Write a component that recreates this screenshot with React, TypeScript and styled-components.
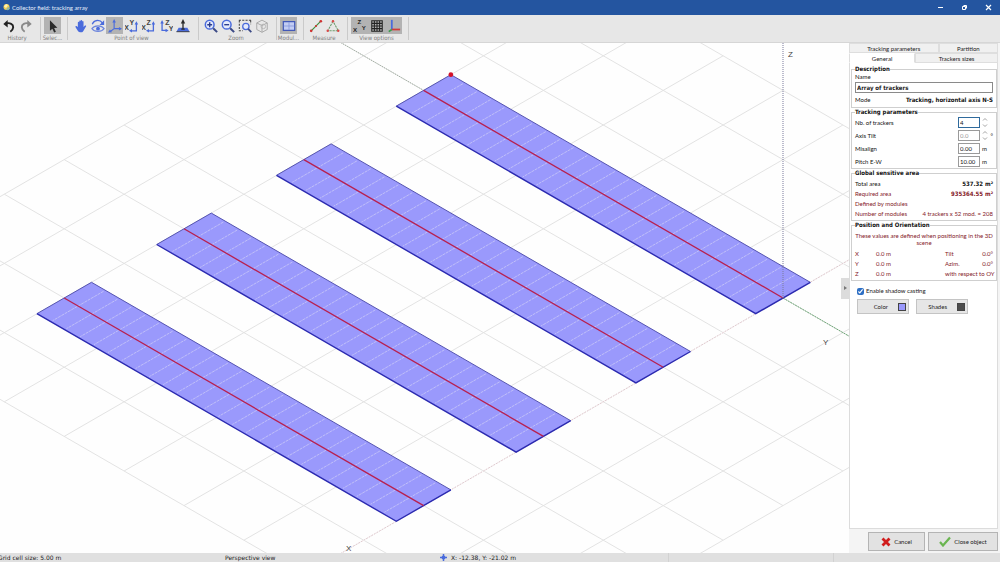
import React from "react";
import styled, { createGlobalStyle } from "styled-components";

const GlobalStyle = createGlobalStyle`
  * { box-sizing: border-box; }
  html, body, #root { height: 100%; margin: 0; }
  body, button, input {
    font-family: "DejaVu Sans Condensed", "DejaVu Sans", sans-serif;
    font-size: 6px;
    line-height: 8px;
    color: #222;
  }
  body { background: #fff; overflow: hidden; }
  button { padding: 0; margin: 0; }
  h1, p { margin: 0; font-weight: normal; }
`;

const Window = styled.div`
  display: flex;
  flex-direction: column;
  min-height: 100vh;
`;

/* Title bar */
const TitleBar = styled.header`
  display: flex;
  align-items: center;
  height: 15px;
  padding-left: 3px;
  background: #2455a0;
  color: #e6eefb;
`;
const Title = styled.h1`
  flex: 1;
  margin-left: 1px;
  font-family: Lato, sans-serif;
  font-size: 6px;
  line-height: 8px;
`;
const WindowButton = styled.button`
  display: flex;
  align-items: center;
  justify-content: center;
  width: 24px;
  height: 15px;
  border: 0;
  background: none;
`;

/* Toolbar */
const Toolbar = styled.nav`
  display: flex;
  height: 28px;
  background: #e7e7e7;
  border-bottom: 1px solid #d6d6d6;
`;
const ToolGroup = styled.div<{ $width: number }>`
  display: flex;
  flex-direction: column;
  align-items: center;
  width: ${(p) => p.$width}px;
  padding-top: 2px;
`;
const ToolRow = styled.div`
  display: flex;
`;
const ToolButton = styled.button<{ $on?: boolean }>`
  display: flex;
  align-items: center;
  justify-content: center;
  width: 17px;
  height: 17px;
  border: 0;
  background: ${(p) => (p.$on ? "#b3b3b3" : "none")};
`;
const ToolLabel = styled.span`
  white-space: nowrap;
  color: #808080;
`;
const ToolDivider = styled.i`
  width: 1px;
  height: 23px;
  margin: 2px 3px 0 6px;
  background: #cacaca;
`;

/* Work area */
const Work = styled.main`
  flex: 1;
  display: flex;
  min-height: 0;
`;
const SceneArea = styled.section`
  position: relative;
  flex: 1;
  min-width: 0;
  background: #fefefe;
`;
const SceneSvg = styled.svg`
  position: absolute;
  inset: 0;
  width: 100%;
  height: 100%;
`;
const Collapse = styled.button`
  position: absolute;
  right: 0;
  top: 46%;
  width: 8px;
  height: 21px;
  border: 0;
  background: #dcdcdc;
  color: #666;
`;

/* Side panel */
const Panel = styled.aside`
  display: flex;
  flex-direction: column;
  width: 151px;
  padding: 0 2px 2px 0;
  background: #f4f4f4;
  &, button, input, label {
    font-family: Lato, "DejaVu Sans Condensed", sans-serif;
  }
`;
const Strong = styled.b`
  font-family: "DejaVu Sans Condensed", sans-serif;
`;
const TabRow = styled.div`
  display: flex;
`;
const Tab = styled.button<{ $grow: number; $on?: boolean }>`
  flex: ${(p) => p.$grow} 1 0;
  height: 10px;
  border: 1px solid #dedede;
  border-top-color: ${(p) => (p.$on ? "#fff" : "#dedede")};
  border-bottom-color: ${(p) => (p.$on ? "#fff" : "#dedede")};
  line-height: 7px;
  background: ${(p) => (p.$on ? "#fff" : "#f0f0f0")};
`;
const Page = styled.div`
  flex: 1;
  display: flex;
  flex-direction: column;
  padding: 2px 0 0 1px;
  border: 1px solid #dcdcdc;
  border-top: 0;
  background: #fff;
`;
const Group = styled.fieldset<{ $top?: number; $bottom?: number }>`
  min-width: 0;
  margin: 0;
  padding: ${(p) => p.$top ?? 0}px 3px ${(p) => p.$bottom ?? 0}px 3px;
  border: 1px solid #cfcfcf;
`;
const Legend = styled.legend`
  padding: 0;
  line-height: 8px;
  font-family: "DejaVu Sans Condensed", sans-serif;
  font-weight: bold;
  color: #111;
`;
const Row = styled.div<{ $h?: number; $red?: boolean }>`
  display: flex;
  align-items: center;
  justify-content: space-between;
  height: ${(p) => p.$h ?? 10}px;
  white-space: nowrap;
  color: ${(p) => (p.$red ? "#842028" : "#111")};
`;
const NameInput = styled.input`
  && {
    display: block;
    width: 100%;
    height: 11px;
    margin-top: 1px;
    padding: 0 1px;
    border: 1px solid #8a8a8a;
    font-family: "DejaVu Sans Condensed", sans-serif;
    font-weight: bold;
  }
`;
const FieldLabel = styled.label`
  flex: 1;
`;
const NumInput = styled.input<{ $focus?: boolean }>`
  width: 22px;
  height: 11px;
  padding: 0 1px;
  border: 1px solid ${(p) => (p.$focus ? "#2f6a9c" : "#9a9a9a")};
  background: #fff;
  color: ${(p) => (p.disabled ? "#999" : "#111")};
`;
const Unit = styled.span`
  display: flex;
  align-items: center;
  justify-content: space-between;
  width: 11px;
  margin-left: 2px;
`;
const Note = styled.p`
  text-align: center;
  line-height: 7px;
  padding: 3px 0 3px;
  color: #842028;
`;
const PosRow = styled.div`
  display: grid;
  grid-template-columns: 21px 1fr auto;
  height: 10px;
  align-items: center;
  color: #842028;
  white-space: nowrap;
`;
const PosRight = styled.span`
  display: flex;
  justify-content: space-between;
  width: 48px;
`;
const CheckLabel = styled.label`
  display: flex;
  align-items: center;
  gap: 2px;
  margin: 6px 0 0 6px;
`;
const Check = styled.input`
  width: 7px;
  height: 7px;
  margin: 0;
  accent-color: #2e6fc4;
`;
const SwatchRow = styled.div`
  display: flex;
  gap: 7px;
  margin: 4px 0 0 6px;
`;
const SwatchButton = styled.button`
  display: flex;
  align-items: center;
  justify-content: flex-end;
  gap: 10px;
  width: 52px;
  height: 15px;
  padding-right: 2px;
  border: 1px solid #c4c4c4;
  background: #e6e6e6;
`;
const Swatch = styled.i<{ $color: string }>`
  width: 8px;
  height: 8px;
  border: 1px solid #444;
  background: ${(p) => p.$color};
`;
const Footer = styled.div`
  display: flex;
  justify-content: flex-end;
  gap: 3px;
  padding-top: 3px;
`;
const FooterButton = styled.button<{ $w: number }>`
  display: flex;
  align-items: center;
  justify-content: center;
  gap: 3px;
  width: ${(p) => p.$w}px;
  height: 19px;
  border: 1px solid #b4b4b4;
  background: #e2e2e2;
`;

/* Status bar */
const StatusBar = styled.footer`
  display: grid;
  grid-template-columns: 225fr 215fr 228fr 165fr 167fr;
  align-items: center;
  height: 9px;
  background: #e0e0e0;
  font-family: "DejaVu Sans", sans-serif;
  white-space: nowrap;
`;
const StatusCell = styled.span<{ $line?: boolean }>`
  display: flex;
  align-items: center;
  gap: 4px;
  height: 9px;
  border-left: ${(p) => (p.$line ? "1px solid #d2d2d2" : "0")};
`;
const ClippedText = styled.span`
  margin-left: -2px;
`;

/* Scene geometry: one grid cell is 5 m, seen in an isometric view */
const ORIGIN = { x: 783, y: 255 };
const CELL = { x: 59.9, y: 34.6 };
const at = (i: number, j: number) => ({
  x: ORIGIN.x + (j - i) * CELL.x,
  y: ORIGIN.y + (i + j) * CELL.y,
});
const pt = (i: number, j: number) => {
  const p = at(i, j);
  return `${p.x.toFixed(1)},${p.y.toFixed(1)}`;
};
const seg = (i1: number, j1: number, i2: number, j2: number) =>
  `M${pt(i1, j1)}L${pt(i2, j2)}`;

const GRID_MIN_X = -3;
const GRID_MAX_X = 8;
const GRID_MIN_Y = -8;
const GRID_MAX_Y = 3;
const HALF = 0.455;
const LENGTH = 6;
const COLUMNS = 26;

const gridPath = [
  ...Array.from({ length: 12 }, (_, n) => seg(GRID_MIN_X + n, GRID_MIN_Y, GRID_MIN_X + n, GRID_MAX_Y)),
  ...Array.from({ length: 12 }, (_, n) => seg(GRID_MIN_X, GRID_MIN_Y + n, GRID_MAX_X, GRID_MIN_Y + n)),
].join("");

function Tracker({ index }: { index: number }) {
  const c = index * 2;
  const joints = Array.from({ length: COLUMNS - 1 }, (_, n) => {
    const j = (-(n + 1) * LENGTH) / COLUMNS;
    return seg(c - HALF + 0.03, j, c + HALF - 0.03, j);
  }).join("");
  return (
    <g>
      <polygon
        points={[pt(c - HALF, -LENGTH), pt(c + HALF, -LENGTH), pt(c + HALF, 0), pt(c - HALF, 0)].join(" ")}
        fill="#9a99fc"
      />
      <path d={joints} stroke="#c4c3f7" strokeWidth="0.9" strokeDasharray="3 0.8" />
      <path d={`M${pt(c + HALF, -LENGTH)}L${pt(c - HALF, -LENGTH)}L${pt(c - HALF, 0)}`} stroke="#5554b0" strokeWidth="1" fill="none" />
      <path d={`M${pt(c + HALF, -LENGTH)}L${pt(c + HALF, 0)}L${pt(c - HALF, 0)}`} stroke="#2b2ab0" strokeWidth="1.4" fill="none" />
      <path d={seg(c, -LENGTH, c, 0)} stroke="#b8204f" strokeWidth="1.3" />
    </g>
  );
}

function Scene() {
  const corner = at(-HALF, -LENGTH);
  return (
    <SceneSvg viewBox="0 0 849 510" preserveAspectRatio="xMaxYMin slice" role="img" aria-label="Tracker array in perspective view">
      <path d={gridPath} stroke="#e3e3e3" strokeWidth="1" />
      <path d={seg(-3, 0, 8, 0)} stroke="#fefefe" strokeWidth="1.2" />
      <path d={seg(-3, 0, 8, 0)} stroke="#dcc3c8" strokeWidth="0.9" strokeDasharray="2 1" />
      <path d={seg(0, -8, 0, -LENGTH)} stroke="#9aa79a" strokeWidth="0.9" strokeDasharray="1.5 1" />
      <path d={seg(0, 0, 0, 3)} stroke="#6fa878" strokeWidth="1" strokeDasharray="2 0.8" />
      {[0, 1, 2, 3].map((n) => (
        <Tracker key={n} index={n} />
      ))}
      <path d={`M${ORIGIN.x} 0V${ORIGIN.y}`} stroke="#7a7a9c" strokeWidth="1" strokeDasharray="1 1" />
      <circle cx={corner.x} cy={corner.y} r="2.4" fill="#d3122a" />
      <g fontFamily="Liberation Sans, sans-serif" fontSize="8" fill="#444">
        <text x="788" y="14">Z</text>
        <text x="823" y="302">Y</text>
        <text x="346" y="508">X</text>
      </g>
    </SceneSvg>
  );
}

/* Icons, all on a 16 x 16 field */
const BLUE = "#4a6bdc";
const NAVY = "#3c4a86";

function Icon({ children, size = 14 }: { children: React.ReactNode; size?: number }) {
  return (
    <svg width={size} height={size} viewBox="0 0 16 16" fill="none" aria-hidden="true">
      {children}
    </svg>
  );
}

const undo = (
  <Icon>
    <path d="M5 5c4-1 8 .8 7.800 4.500-.1 2-1.300 3.700-3.300 5" stroke="#222" strokeWidth="2.200" />
    <path d="M1.500 5.600 6.500 1v8.600z" fill="#222" />
  </Icon>
);
const redo = (
  <Icon>
    <path d="M11 5c-4-1-8 .8-7.800 4.500.1 2 1.300 3.700 3.300 5" stroke="#8a8a8a" strokeWidth="2.200" />
    <path d="M14.500 5.600 9.500 1v8.600z" fill="#8a8a8a" />
  </Icon>
);
const pointer = (
  <Icon>
    <path d="M4.500 1.500v12l2.800-2.400 2 4.300 2-.9-2-4.200 3.700-.3z" fill="#2a2a2a" />
  </Icon>
);
const hand = (
  <Icon>
    <path
      d="M4.400 9V4c0-1 1.600-1 1.600 0V2.600c0-1 1.600-1 1.600 0V1.800c0-1 1.700-1 1.700 0V3c0-1 1.600-1 1.600 0V9l1.600-1.500c.9-.6 1.800.2 1.200 1.100l-3 5c-.5.800-1.200 1.400-2.200 1.400H6.800c-1.200 0-1.900-.6-2.500-1.600L1.800 9.300c-.5-1 .6-1.600 1.400-.9z"
      fill={BLUE}
    />
  </Icon>
);
const orbit = (
  <Icon>
    <path d="M1.500 6c2-5.500 8.800-5.500 11.500-1.500" stroke={BLUE} strokeWidth="1.500" />
    <path d="M15 1.500v5.300H9.700z" fill={BLUE} />
    <path d="M1 11c3-4.200 11-4.200 14 0-3 4.200-11 4.200-14 0z" stroke="#6d86dd" strokeWidth="1.300" />
    <circle cx="8" cy="11" r="2.200" fill={BLUE} />
  </Icon>
);
const axes = (
  <Icon>
    <path d="M7 3v8h7M7 11 3 14" stroke={BLUE} strokeWidth="1.300" />
    <path d="M7 0 5 4h4zM16 11l-3.500-2v4zM0 15.500l4.500-.5-2.300-3z" fill={BLUE} />
  </Icon>
);

function AxisIcon({ left, top, flip }: { left: string; top: string; flip?: boolean }) {
  return (
    <Icon>
      <path d={flip ? "M3.500 4v9h5" : "M13 5v8.500H7"} stroke={BLUE} strokeWidth="1.500" />
      <path d={flip ? "M3.500 1 1.500 5h4zM11 13 7.500 11v4z" : "M13 2.500l-2 3.800h4zM4.500 13.500l3.500-2v4z"} fill={BLUE} />
      <g fontFamily="Liberation Sans, sans-serif" fontSize="8" fontWeight="bold" fill="#444">
        <text x={flip ? 11 : -1} y={flip ? 14 : 12}>{left}</text>
        <text x={flip ? 7 : 5} y="7">{top}</text>
      </g>
    </Icon>
  );
}

const groundView = (
  <Icon>
    <path d="M3 10h10l2.500 4.500H.5z" fill={BLUE} />
    <path d="M.5 14.500h15" stroke="#333" />
    <path d="M8 4v7.500M6 11.500h4" stroke="#2a2a2a" strokeWidth="1.500" />
    <path d="M8 0 5.500 5h5z" fill="#2a2a2a" />
  </Icon>
);
function Magnifier({ plus }: { plus?: boolean }) {
  return (
    <Icon>
      <circle cx="6.500" cy="6.500" r="5" stroke={BLUE} strokeWidth="1.700" fill="#e4eafc" />
      <path d="M10.500 10.500 15 15" stroke={NAVY} strokeWidth="2.300" />
      <path d={plus ? "M3.700 6.500h5.600M6.500 3.700v5.600" : "M3.700 6.500h5.600"} stroke="#2b3c8c" strokeWidth="1.600" />
    </Icon>
  );
}
const zoomArea = (
  <Icon>
    <path d="M1 1.500h14M1.500 1.500v12h4M14.500 1.500V6" stroke="#444" strokeWidth="1.200" strokeDasharray="2.400 1.400" />
    <circle cx="9" cy="8.500" r="3.600" stroke={BLUE} strokeWidth="1.500" fill="#e4eafc" />
    <path d="m11.600 11.200 3.600 3.800" stroke={NAVY} strokeWidth="2" />
  </Icon>
);
const cube = (
  <Icon>
    <path d="M2 4.500l6-3.200 6 3.200v7.500l-6 3.200-6-3.200zM2 4.500l6 3 6-3M8 7.500v7.700" stroke="#a9a9a9" strokeWidth="1.100" />
    <circle cx="9.500" cy="8.500" r="2.600" stroke="#b3b3b3" />
  </Icon>
);
const modules = (
  <Icon>
    <rect x="1.500" y="3" width="13" height="10" fill="#c3cdf4" stroke="#4259b8" strokeWidth="1.400" />
    <path d="M2 8h12M8 3.500v9" stroke="#8496dc" strokeWidth="0.900" />
  </Icon>
);
const distance = (
  <Icon>
    <path d="M2.500 13.500l11-11" stroke="#3c8c3c" strokeWidth="1.300" />
    <circle cx="2.500" cy="13.500" r="1.500" fill="#d03030" />
    <circle cx="8" cy="8" r="1.200" fill="#d03030" />
    <circle cx="13.500" cy="2.500" r="1.500" fill="#d03030" />
  </Icon>
);
const triangle = (
  <Icon>
    <path d="M8 2.500 2 13.500h12z" stroke="#6b9c6b" strokeWidth="1.200" strokeDasharray="2.600 1" />
    <g fill="#d84848">
      <circle cx="8" cy="2.500" r="1.400" />
      <circle cx="2" cy="13.500" r="1.400" />
      <circle cx="14" cy="13.500" r="1.400" />
    </g>
  </Icon>
);
const axisNames = (
  <Icon>
    <g fontFamily="Liberation Sans, sans-serif" fontSize="7" fontWeight="bold" fill="#222">
      <text x="5" y="6">Z</text>
      <text x="0" y="15">X</text>
      <text x="10" y="12">Y</text>
    </g>
  </Icon>
);
const gridIcon = (
  <Icon>
    <path d="M2 1.500v13M5 1.500v13M8 1.500v13M11 1.500v13M14 1.500v13M1.500 2h13M1.500 5h13M1.500 8h13M1.500 11h13M1.500 14h13" stroke="#222" strokeWidth="1.200" />
  </Icon>
);
const originIcon = (
  <Icon>
    <path d="M5.500 1v11" stroke={BLUE} strokeWidth="2" />
    <path d="M5.500 12H15" stroke="#d23a3a" strokeWidth="2" />
    <path d="M5.500 12l-3.500 2.500" stroke="#3a9a4a" strokeWidth="1.800" />
  </Icon>
);

type Tool = { name: string; icon: React.ReactNode; on?: boolean };
const toolGroups: { label: string; width: number; tools: Tool[] }[] = [
  { label: "History", width: 34, tools: [{ name: "Undo", icon: undo }, { name: "Redo", icon: redo }] },
  { label: "Selec...", width: 17, tools: [{ name: "Select", icon: pointer, on: true }] },
  {
    label: "Point of view",
    width: 121,
    tools: [
      { name: "Pan", icon: hand },
      { name: "Orbit", icon: orbit },
      { name: "Perspective", icon: axes, on: true },
      { name: "Top view", icon: <AxisIcon left="X" top="Y" /> },
      { name: "Front view", icon: <AxisIcon left="X" top="Z" /> },
      { name: "Side view", icon: <AxisIcon left="Y" top="Z" flip /> },
      { name: "Observer", icon: groundView },
    ],
  },
  {
    label: "Zoom",
    width: 68,
    tools: [
      { name: "Zoom in", icon: <Magnifier plus /> },
      { name: "Zoom out", icon: <Magnifier /> },
      { name: "Zoom window", icon: zoomArea },
      { name: "Zoom all", icon: cube },
    ],
  },
  { label: "Modul...", width: 17, tools: [{ name: "Modules", icon: modules, on: true }] },
  { label: "Measure", width: 34, tools: [{ name: "Distance", icon: distance }, { name: "Angle", icon: triangle }] },
  {
    label: "View options",
    width: 51,
    tools: [
      { name: "Axis names", icon: axisNames, on: true },
      { name: "Grid", icon: gridIcon, on: true },
      { name: "Origin", icon: originIcon, on: true },
    ],
  },
];

const parameters = [
  { id: "count", label: "Nb. of trackers", value: "4", unit: "", spin: true, focus: true },
  { id: "tilt", label: "Axis Tilt", value: "0.0", unit: "°", spin: true, disabled: true },
  { id: "misalign", label: "Misalign", value: "0.00", unit: "m" },
  { id: "pitch", label: "Pitch E-W", value: "10.00", unit: "m" },
];

function Spinner() {
  return (
    <svg width="6" height="11" viewBox="0 0 6 11" fill="none" stroke="#a4a4a4" aria-hidden="true">
      <path d="M1 3.500 3 1.500l2 2M1 7.500l2 2 2-2" strokeWidth="1" />
    </svg>
  );
}

export default function App() {
  return (
    <Window>
      <GlobalStyle />
      <TitleBar>
        <svg width="8" height="9" viewBox="0 0 8 9" aria-hidden="true">
          <circle cx="3.500" cy="4" r="3" fill="#f1cf55" />
          <path d="M3 6.500c1.500 1.500 3.500.5 4-1.500l-2-1z" fill="#8fb4a0" />
          <path d="M1 3.500 3 1l2 1-2 3z" fill="#fff1b0" />
        </svg>
        <Title>Collector field: tracking array</Title>
        <WindowButton aria-label="Minimize">
          <svg width="7" height="7" stroke="#fff"><path d="M1 3.500h5" /></svg>
        </WindowButton>
        <WindowButton aria-label="Restore">
          <svg width="7" height="7" stroke="#fff" fill="none"><path d="M1.500 2.500h3v3h-3zM2.500 1.500h3v3" /></svg>
        </WindowButton>
        <WindowButton aria-label="Close">
          <svg width="7" height="7" stroke="#fff" strokeWidth="1.200"><path d="M1 1l5 5M6 1 1 6" /></svg>
        </WindowButton>
      </TitleBar>

      <Toolbar>
        {toolGroups.map((g) => (
          <React.Fragment key={g.label}>
            <ToolGroup $width={g.width}>
              <ToolRow>
                {g.tools.map((t) => (
                  <ToolButton key={t.name} aria-label={t.name} $on={t.on}>{t.icon}</ToolButton>
                ))}
              </ToolRow>
              <ToolLabel>{g.label}</ToolLabel>
            </ToolGroup>
            <ToolDivider />
          </React.Fragment>
        ))}
      </Toolbar>

      <Work>
        <SceneArea>
          <Scene />
          <Collapse aria-label="Collapse panel">
            <svg width="3" height="4" aria-hidden="true"><path d="M0 0l3 2-3 2z" fill="#777" /></svg>
          </Collapse>
        </SceneArea>

        <Panel>
          <TabRow>
            <Tab $grow={90}>Tracking parameters</Tab>
            <Tab $grow={59}>Partition</Tab>
          </TabRow>
          <TabRow>
            <Tab $grow={66} $on>General</Tab>
            <Tab $grow={83}>Trackers sizes</Tab>
          </TabRow>
          <Page>
            <Group>
              <Legend>Description</Legend>
              <Row $h={8}><label htmlFor="name">Name</label></Row>
              <NameInput id="name" defaultValue="Array of trackers" />
              <Row $h={14}><span>Mode</span><Strong>Tracking, horizontal axis N-S</Strong></Row>
            </Group>

            <Group>
              <Legend>Tracking parameters</Legend>
              {parameters.map((p) => (
                <Row key={p.id} $h={13}>
                  <FieldLabel htmlFor={p.id}>{p.label}</FieldLabel>
                  <NumInput id={p.id} defaultValue={p.value} disabled={p.disabled} $focus={p.focus} />
                  <Unit>
                    {p.spin && <Spinner />}
                    {p.unit}
                  </Unit>
                </Row>
              ))}
            </Group>

            <Group $top={2} $bottom={1}>
              <Legend>Global sensitive area</Legend>
              <Row><span>Total area</span><Strong>537.32 m²</Strong></Row>
              <Row $red><span>Required area</span><Strong>935364.55 m²</Strong></Row>
              <Row $red>Defined by modules</Row>
              <Row $red><span>Number of modules</span><span>4 trackers x 52 mod. = 208</span></Row>
            </Group>

            <Group $bottom={1}>
              <Legend>Position and Orientation</Legend>
              <Note>These values are defined when positioning in the 3D scene</Note>
              <PosRow><span>X</span><span>0.0 m</span><PosRight><span>Tilt</span><span>0.0°</span></PosRight></PosRow>
              <PosRow><span>Y</span><span>0.0 m</span><PosRight><span>Azim.</span><span>0.0°</span></PosRight></PosRow>
              <PosRow><span>Z</span><span>0.0 m</span><PosRight>with respect to OY</PosRight></PosRow>
            </Group>

            <CheckLabel>
              <Check type="checkbox" defaultChecked />
              Enable shadow casting
            </CheckLabel>
            <SwatchRow>
              <SwatchButton>Color<Swatch $color="#9a99fc" /></SwatchButton>
              <SwatchButton>Shades<Swatch $color="#4c4c4c" /></SwatchButton>
            </SwatchRow>
          </Page>
          <Footer>
            <FooterButton $w={57}>
              <svg width="10" height="10" viewBox="0 0 10 10" aria-hidden="true">
                <path d="M1.500 1.500 8.500 8.500M8.500 1.500 1.500 8.500" stroke="#d01c1c" strokeWidth="2.800" />
              </svg>
              Cancel
            </FooterButton>
            <FooterButton $w={70}>
              <svg width="12" height="11" viewBox="0 0 12 11" fill="none" aria-hidden="true">
                <path d="M1 6l3 3.500L11 1.500" stroke="#6ab550" strokeWidth="2.200" />
              </svg>
              Close object
            </FooterButton>
          </Footer>
        </Panel>
      </Work>

      <StatusBar>
        <StatusCell><ClippedText>Grid cell size: 5.00 m</ClippedText></StatusCell>
        <StatusCell>Perspective view</StatusCell>
        <StatusCell>
          <svg width="7" height="7" viewBox="0 0 7 7" aria-hidden="true">
            <path d="M3.500 0v7M0 3.500h7" stroke={BLUE} strokeWidth="1.500" />
            <circle cx="3.500" cy="3.500" r="2" fill={BLUE} />
          </svg>
          X: -12.38, Y: -21.02 m
        </StatusCell>
        <StatusCell $line />
        <StatusCell $line />
      </StatusBar>
    </Window>
  );
}
